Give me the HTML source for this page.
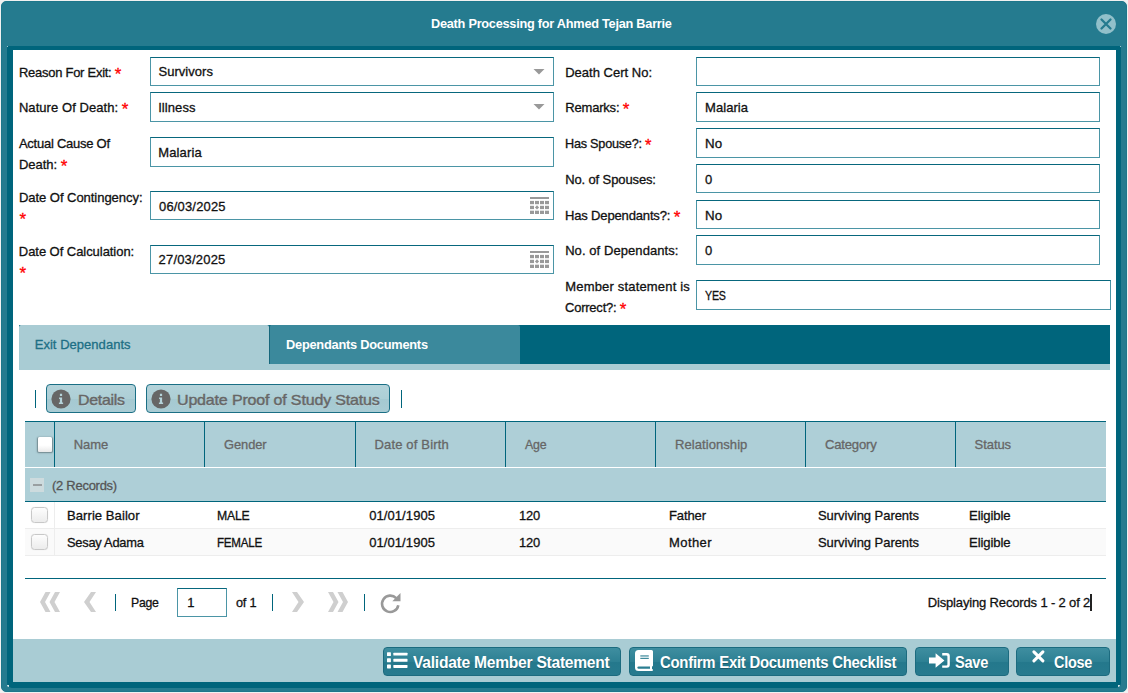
<!DOCTYPE html>
<html lang="en">
<head>
<meta charset="utf-8">
<title>Death Processing for Ahmed Tejan Barrie</title>
<style>
html,body{margin:0;padding:0;}
body{width:1128px;height:693px;overflow:hidden;background:#f1f1f1;position:relative;font-family:"Liberation Sans",sans-serif;color:#111;}
.a{position:absolute;box-sizing:border-box;}
.t{position:absolute;white-space:nowrap;line-height:20px;transform-origin:0 50%;-webkit-text-stroke:0.3px currentColor;}
.r{color:#f00;font-size:17px;line-height:0;position:relative;top:2.5px;}
.win{left:1px;top:1px;width:1126px;height:691px;background:#257b8f;border-radius:5px;border:1px solid #1e778b;}
.frame{left:7px;top:46px;width:1114px;height:642px;background:#00657c;border-radius:0 0 5px 5px;}
.wbody{left:13px;top:50px;width:1103px;height:589px;background:#fff;}
.bbar{left:13px;top:639px;width:1103px;height:43px;background:#a9ccd4;}
.inp{background:#fff;border:1px solid #4b95a6;border-top-color:#08677d;}
.tabbar{left:19px;top:325px;width:1091px;height:39px;background:#00657c;}
.tabstrip{left:19px;top:364px;width:1091px;height:6px;background:#a9ccd4;}
.tab1{left:19px;top:325px;width:250px;height:45px;background:#a9ccd4;border-radius:2px 2px 0 0;}
.tab2{left:269px;top:325px;width:251px;height:39px;background:#3b899c;border-left:1px solid #16677c;border-radius:2px 2px 0 0;}
.sep{width:1px;background:#00657c;}
.tbtn{border:1px solid #1b6f85;border-radius:4px;background:linear-gradient(#b4d3da,#adcfd6 50%,#a5c9d1 51%,#a9ccd4);}
.ghead{left:25px;top:421px;width:1081px;height:46px;background:#aecfd7;border-top:1px solid #00657c;}
.ggrp{left:25px;top:468px;width:1081px;height:34px;background:#aecfd7;border-bottom:1px solid #00657c;}
.row{left:25px;width:1081px;height:27px;border-bottom:1px solid #ededed;}
.cb{width:17px;height:16px;border:1.5px solid #c8c8c8;border-radius:3.5px;background:linear-gradient(#fdfdfd,#ececec);box-shadow:0 0 1px rgba(0,0,0,.12);}
.fbtn{border:1px solid #1c6b7f;border-radius:4px;background:linear-gradient(#3f8ea0,#2d8093 50%,#24788c 51%,#277a8e);}
svg{position:absolute;overflow:visible;}

</style>
</head>
<body>
<div class="a win"></div>
<div class="a frame"></div>
<div class="a wbody"></div>
<div class="a" style="left:7px;top:46px;width:1px;height:1px;background:#9ec3cc"></div><div class="a" style="left:1120px;top:46px;width:1px;height:1px;background:#9ec3cc"></div><div class="a" style="left:7px;top:685px;width:2px;height:2px;background:#d5e6ea;border-radius:0 0 0 2px"></div><div class="a" style="left:1118px;top:685px;width:2px;height:2px;background:#d5e6ea;border-radius:0 0 2px 0"></div>
<div class="a bbar"></div>
<!-- close tool -->
<svg style="left:1096px;top:14px" width="20" height="20" viewBox="0 0 20 20"><circle cx="10" cy="10" r="10" fill="#92c0ca"/><path d="M5.5 5.5L14.5 14.5M14.5 5.5L5.5 14.5" stroke="#257b8f" stroke-width="2.3" stroke-linecap="round" fill="none"/></svg>
<!-- left inputs -->
<div class="a inp" style="left:150px;top:57px;width:404px;height:29px"></div>
<div class="a inp" style="left:150px;top:92px;width:404px;height:30px"></div>
<div class="a inp" style="left:150px;top:137px;width:404px;height:30px"></div>
<div class="a inp" style="left:150px;top:191px;width:404px;height:29px"></div>
<div class="a inp" style="left:150px;top:245px;width:404px;height:29px"></div>
<!-- combo arrows -->
<svg style="left:533px;top:69px" width="12" height="6" viewBox="0 0 12 6"><path d="M0.5 0H11.5L6 5.5Z" fill="#999"/></svg>
<svg style="left:533px;top:104px" width="12" height="6" viewBox="0 0 12 6"><path d="M0.5 0H11.5L6 5.5Z" fill="#999"/></svg>
<!-- date icons -->
<svg style="left:530px;top:197px" width="19" height="17" viewBox="0 0 19 17" fill="#999"><rect x="0" y="0" width="19" height="2"/><g id="calg"><rect x="0" y="3.9" width="4" height="3.3"/><rect x="5" y="3.9" width="4" height="3.3"/><rect x="10" y="3.9" width="4" height="3.3"/><rect x="15" y="3.9" width="4" height="3.3"/><rect x="0" y="8.8" width="4" height="3.3"/><path d="M7 8.3L9.100 10.400L7 12.500L4.900 10.400Z"/><rect x="10" y="8.8" width="4" height="3.3"/><rect x="15" y="8.8" width="4" height="3.3"/><rect x="0" y="13.7" width="4" height="3.3"/><rect x="5" y="13.7" width="4" height="3.3"/><rect x="10" y="13.7" width="4" height="3.3"/><rect x="15" y="13.7" width="4" height="3.3"/></g></svg>
<svg style="left:530px;top:251px" width="19" height="17" viewBox="0 0 19 17" fill="#999"><rect x="0" y="0" width="19" height="2"/><rect x="0" y="3.9" width="4" height="3.3"/><rect x="5" y="3.9" width="4" height="3.3"/><rect x="10" y="3.9" width="4" height="3.3"/><rect x="15" y="3.9" width="4" height="3.3"/><rect x="0" y="8.8" width="4" height="3.3"/><path d="M7 8.3L9.100 10.400L7 12.500L4.900 10.400Z"/><rect x="10" y="8.8" width="4" height="3.3"/><rect x="15" y="8.8" width="4" height="3.3"/><rect x="0" y="13.7" width="4" height="3.3"/><rect x="5" y="13.7" width="4" height="3.3"/><rect x="10" y="13.7" width="4" height="3.3"/><rect x="15" y="13.7" width="4" height="3.3"/></svg>
<!-- right inputs -->
<div class="a inp" style="left:696px;top:57px;width:404px;height:29px"></div>
<div class="a inp" style="left:696px;top:92px;width:404px;height:30px"></div>
<div class="a inp" style="left:696px;top:128px;width:404px;height:30px"></div>
<div class="a inp" style="left:696px;top:164px;width:404px;height:29px"></div>
<div class="a inp" style="left:696px;top:200px;width:404px;height:29px"></div>
<div class="a inp" style="left:696px;top:235px;width:404px;height:30px"></div>
<div class="a inp" style="left:696px;top:280px;width:415px;height:30px"></div>
<!-- tabs -->
<div class="a tabbar"></div>
<div class="a tabstrip"></div>
<div class="a tab1"></div>
<div class="a tab2"></div>
<!-- toolbar -->
<div class="a sep" style="left:35px;top:390px;height:18px"></div>
<div class="a sep" style="left:401px;top:390px;height:18px"></div>
<div class="a tbtn" style="left:46px;top:384px;width:90px;height:29px"></div>
<div class="a tbtn" style="left:146px;top:384px;width:244px;height:29px"></div>
<svg style="left:51px;top:389px" width="20" height="20" viewBox="0 0 20 20"><circle cx="10" cy="10" r="9.6" fill="#666"/><path d="M8.1 8.5H11.1V13.6H12.1V15.1H7.9V13.6H8.9V9.9H8.1ZM8.9 4.7H11.1V7H8.9Z" fill="#b4d3da"/></svg>
<svg style="left:151px;top:389px" width="20" height="20" viewBox="0 0 20 20"><circle cx="10" cy="10" r="9.6" fill="#666"/><path d="M8.1 8.5H11.1V13.6H12.1V15.1H7.9V13.6H8.9V9.9H8.1ZM8.9 4.7H11.1V7H8.9Z" fill="#b4d3da"/></svg>
<!-- grid -->
<div class="a ghead"></div>
<div class="a ggrp"></div>
<div class="a sep" style="left:54px;top:422px;height:45px"></div>
<div class="a sep" style="left:204px;top:422px;height:45px"></div>
<div class="a sep" style="left:355px;top:422px;height:45px"></div>
<div class="a sep" style="left:505px;top:422px;height:45px"></div>
<div class="a sep" style="left:655px;top:422px;height:45px"></div>
<div class="a sep" style="left:805px;top:422px;height:45px"></div>
<div class="a sep" style="left:955px;top:422px;height:45px"></div>
<div class="a" style="left:38px;top:437px;width:14px;height:15px;background:linear-gradient(#fff 55%,#e9e9e9);border-radius:1.5px;box-shadow:0 0.5px 1.5px 0.3px rgba(70,85,90,.6)"></div>
<div class="a" style="left:30px;top:478px;width:14px;height:14px;background:#cddbde;"></div>
<div class="a" style="left:32.500px;top:484px;width:9px;height:2px;background:#9a9fa1;"></div>
<div class="a row" style="top:502px;background:#fff"></div>
<div class="a row" style="top:529px;background:#fafafa"></div>
<div class="a" style="left:54px;top:502px;width:1px;height:54px;background:#ededed"></div>
<div class="a cb" style="left:31px;top:507px"></div>
<div class="a cb" style="left:31px;top:534px"></div>
<!-- paging -->
<div class="a" style="left:25px;top:578px;width:1081px;height:1px;background:#00657c"></div>
<svg style="left:40px;top:592px" width="20" height="20" viewBox="0 0 20 20" fill="#cfcfcf"><path d="M5.500 0H10.500L5 10L10.500 20H5.500L0 10Z"/><path d="M15 0H20L14.500 10L20 20H15L9.500 10Z"/></svg>
<svg style="left:83.5px;top:592px" width="12" height="20" viewBox="0 0 12 20" fill="#cfcfcf"><path d="M7 0H12L5.5 10L12 20H7L0 10Z"/></svg>
<div class="a sep" style="left:115px;top:594px;height:17px"></div>
<div class="a inp" style="left:177px;top:588px;width:50px;height:29px"></div>
<div class="a sep" style="left:272px;top:594px;height:17px"></div>
<svg style="left:291.5px;top:592px" width="12" height="20" viewBox="0 0 12 20" fill="#cfcfcf"><path d="M0 0H5L12 10L5 20H0L6.5 10Z"/></svg>
<svg style="left:327.7px;top:592px" width="20" height="20" viewBox="0 0 20 20" fill="#cfcfcf"><path d="M0 0H5L10.500 10L5 20H0L5.500 10Z"/><path d="M9.500 0H14.500L20 10L14.500 20H9.500L15 10Z"/></svg>
<div class="a sep" style="left:364px;top:594px;height:17px"></div>
<svg style="left:379.5px;top:591.5px" width="21" height="21" viewBox="0 0 21 21"><path d="M16.2 6.2A8.2 8.2 0 1 0 18.3 13.2" fill="none" stroke="#999" stroke-width="2.6"/><path d="M20.5 1V9.2H12.3Z" fill="#999"/></svg>
<div class="a" style="left:1090px;top:594px;width:1.5px;height:17px;background:#222"></div>
<!-- bottom buttons -->
<div class="a fbtn" style="left:383px;top:647px;width:238px;height:29px"></div>
<div class="a fbtn" style="left:629px;top:647px;width:278px;height:29px"></div>
<div class="a fbtn" style="left:915px;top:647px;width:94px;height:29px"></div>
<div class="a fbtn" style="left:1016px;top:647px;width:94px;height:29px"></div>
<svg style="left:386.9px;top:651.8px" width="20.5" height="17" viewBox="0 0 21 17" fill="#fff"><rect x="0" y="0" width="4" height="4" rx=".6"/><rect x="6.5" y=".5" width="14.5" height="3" rx=".6"/><rect x="0" y="6.3" width="4" height="4" rx=".6"/><rect x="6.5" y="6.8" width="14.5" height="3" rx=".6"/><rect x="0" y="12.6" width="4" height="4" rx=".6"/><rect x="6.5" y="13.1" width="14.5" height="3" rx=".6"/></svg>
<svg style="left:635px;top:650px" width="18" height="21" viewBox="0 0 18 21"><path d="M3.5 0H16.5A1.5 1.5 0 0 1 18 1.500V15.500A1 1 0 0 1 17 16.500V19A1 1 0 0 1 17 21H3.500A3.500 3.500 0 0 1 0 17.500V3.500A3.500 3.500 0 0 1 3.500 0Z" fill="#fff"/><path d="M3.6 16.400H15V18.800H3.600A1.200 1.200 0 0 1 3.600 16.400Z" fill="#2b7e91"/><rect x="5.300" y="5.400" width="8.500" height="1.100" fill="#2b7e91"/><rect x="5.300" y="7.800" width="8.500" height="1.100" fill="#2b7e91"/></svg>
<svg style="left:929.2px;top:653.2px" width="21" height="15" viewBox="0 0 21 15" fill="#fff"><path d="M0 4.500H6.600V0.300L15.400 7.500L6.600 14.700V10.500H0Z"/><path d="M13.200 0H17.800A3 3 0 0 1 20.800 3V11.800A3 3 0 0 1 17.800 14.800H13.200V12.400H17.400A1 1 0 0 0 18.400 11.400V3.400A1 1 0 0 0 17.400 2.400H13.200Z"/></svg>
<svg style="left:1032px;top:649.9px" width="13" height="13" viewBox="0 0 13 13"><path d="M1.900 1.900L10.900 10.900M10.900 1.900L1.900 10.900" stroke="#fff" stroke-width="3.100" stroke-linecap="round" fill="none"/></svg>

<!-- text -->
<span class="t" id="title" style="left:431.41px;top:14px;font-size:13px;font-weight:bold;color:#fff;letter-spacing:-0.250px;transform:scaleX(0.9784);-webkit-text-stroke-width:0;">Death Processing for Ahmed Tejan Barrie</span>
<span class="t" id="l1" style="left:18.50px;top:63px;font-size:13px;letter-spacing:-0.250px;transform:scaleX(0.9963);">Reason For Exit: <span class="r">*</span></span>
<span class="t" id="l2" style="left:18.91px;top:98px;font-size:13px;letter-spacing:0.061px;">Nature Of Death: <span class="r">*</span></span>
<span class="t" id="l3a" style="left:18.92px;top:134px;font-size:13px;letter-spacing:-0.250px;">Actual Cause Of</span>
<span class="t" id="l3b" style="left:18.91px;top:155px;font-size:13px;letter-spacing:-0.020px;">Death: <span class="r">*</span></span>
<span class="t" id="l4a" style="left:18.80px;top:188px;font-size:13px;letter-spacing:-0.063px;transform:scaleX(1.0035);">Date Of Contingency:</span>
<span class="t" id="l4b" style="left:19.60px;top:208px;font-size:13px;"><span class="r">*</span></span>
<span class="t" id="l5a" style="left:18.80px;top:242px;font-size:13px;letter-spacing:-0.050px;">Date Of Calculation:</span>
<span class="t" id="l5b" style="left:19.60px;top:262px;font-size:13px;"><span class="r">*</span></span>
<span class="t" id="r1" style="left:565.15px;top:63px;font-size:13px;letter-spacing:0.018px;">Death Cert No:</span>
<span class="t" id="r2" style="left:565.25px;top:98px;font-size:13px;letter-spacing:-0.190px;">Remarks: <span class="r">*</span></span>
<span class="t" id="r3" style="left:565.39px;top:134px;font-size:13px;letter-spacing:-0.250px;transform:scaleX(0.9758);">Has Spouse?: <span class="r">*</span></span>
<span class="t" id="r4" style="left:565.15px;top:170px;font-size:13px;letter-spacing:-0.118px;">No. of Spouses:</span>
<span class="t" id="r5" style="left:565.20px;top:206px;font-size:13px;letter-spacing:-0.175px;transform:scaleX(1.0031);">Has Dependants?: <span class="r">*</span></span>
<span class="t" id="r6" style="left:565.15px;top:241px;font-size:13px;letter-spacing:0.074px;">No. of Dependants:</span>
<span class="t" id="r7a" style="left:565.25px;top:277px;font-size:13px;letter-spacing:0.178px;">Member statement is</span>
<span class="t" id="r7b" style="left:565.36px;top:298px;font-size:13px;letter-spacing:-0.213px;transform:scaleX(0.9973);">Correct?: <span class="r">*</span></span>
<span class="t" id="v1" style="left:158.44px;top:62px;font-size:13px;letter-spacing:0.033px;">Survivors</span>
<span class="t" id="v2" style="left:158.17px;top:98px;font-size:13px;letter-spacing:0.081px;">Illness</span>
<span class="t" id="v3" style="left:158.15px;top:143px;font-size:13px;letter-spacing:0.176px;">Malaria</span>
<span class="t" id="v4" style="left:159.06px;top:197px;font-size:13px;letter-spacing:0.193px;transform:scaleX(0.9962);">06/03/2025</span>
<span class="t" id="v5" style="left:158.54px;top:250px;font-size:13px;letter-spacing:0.192px;">27/03/2025</span>
<span class="t" id="w2" style="left:704.50px;top:98px;font-size:13px;letter-spacing:0.050px;transform:scaleX(1.0025);">Malaria</span>
<span class="t" id="w3" style="left:704.50px;top:134px;font-size:13px;letter-spacing:0.230px;transform:scaleX(1.0257);">No</span>
<span class="t" id="w4" style="left:705.10px;top:170px;font-size:13px;">0</span>
<span class="t" id="w5" style="left:704.50px;top:206px;font-size:13px;letter-spacing:0.230px;transform:scaleX(1.0257);">No</span>
<span class="t" id="w6" style="left:705.10px;top:241px;font-size:13px;">0</span>
<span class="t" id="w7" style="left:705.12px;top:286px;font-size:13px;letter-spacing:-0.250px;transform:scaleX(0.8180);">YES</span>
<span class="t" id="tab1" style="left:34.70px;top:335px;font-size:13px;color:#1d6f85;letter-spacing:0.034px;">Exit Dependants</span>
<span class="t" id="tab2" style="left:285.98px;top:335px;font-size:13px;font-weight:bold;color:#fff;letter-spacing:-0.250px;transform:scaleX(0.9858);-webkit-text-stroke-width:0;">Dependants Documents</span>
<span class="t" id="b1" style="left:77.66px;top:390px;font-size:16px;color:#666;letter-spacing:-0.250px;transform:scale(0.9924,0.95);transform-origin:0 15px;-webkit-text-stroke-width:.45px;text-shadow:0 1px 0 rgba(255,255,255,.3);">Details</span>
<span class="t" id="b2" style="left:176.69px;top:390px;font-size:16px;color:#666;letter-spacing:-0.163px;transform:scale(0.9997,0.95);transform-origin:0 15px;-webkit-text-stroke-width:.45px;text-shadow:0 1px 0 rgba(255,255,255,.3);">Update Proof of Study Status</span>
<span class="t" id="h1" style="left:73.70px;top:435px;font-size:13px;color:#666;letter-spacing:-0.068px;">Name</span>
<span class="t" id="h2" style="left:223.90px;top:435px;font-size:13px;color:#666;letter-spacing:-0.050px;transform:scaleX(0.9888);">Gender</span>
<span class="t" id="h3" style="left:374.46px;top:435px;font-size:13px;color:#666;letter-spacing:0.169px;">Date of Birth</span>
<span class="t" id="h4" style="left:525.46px;top:435px;font-size:13px;color:#666;letter-spacing:-0.250px;transform:scaleX(0.9521);">Age</span>
<span class="t" id="h5" style="left:674.70px;top:435px;font-size:13px;color:#666;letter-spacing:0.056px;transform:scaleX(1.0029);">Relationship</span>
<span class="t" id="h6" style="left:824.70px;top:435px;font-size:13px;color:#666;letter-spacing:-0.193px;transform:scaleX(1.0054);">Category</span>
<span class="t" id="h7" style="left:974.58px;top:435px;font-size:13px;color:#666;letter-spacing:-0.068px;">Status</span>
<span class="t" id="grp" style="left:51.54px;top:476px;font-size:13px;color:#555;letter-spacing:-0.250px;transform:scaleX(0.9958);">(2 Records)</span>
<span class="t" id="na" style="left:67.00px;top:506px;font-size:13px;letter-spacing:0.041px;transform:scaleX(1.0069);">Barrie Bailor</span>
<span class="t" id="ga" style="left:217.37px;top:506px;font-size:13px;letter-spacing:-0.250px;transform:scaleX(0.9411);">MALE</span>
<span class="t" id="da" style="left:369.17px;top:506px;font-size:13px;letter-spacing:0.087px;">01/01/1905</span>
<span class="t" id="ea" style="left:518.63px;top:506px;font-size:13px;letter-spacing:-0.250px;transform:scaleX(0.9940);">120</span>
<span class="t" id="fa" style="left:669.00px;top:506px;font-size:13px;letter-spacing:-0.123px;">Father</span>
<span class="t" id="ca" style="left:817.84px;top:506px;font-size:13px;letter-spacing:-0.034px;transform:scaleX(0.9976);">Surviving Parents</span>
<span class="t" id="sa" style="left:968.70px;top:506px;font-size:13px;letter-spacing:-0.112px;transform:scaleX(1.0083);">Eligible</span>
<span class="t" id="nb" style="left:66.84px;top:533px;font-size:13px;letter-spacing:-0.250px;transform:scaleX(0.9882);">Sesay Adama</span>
<span class="t" id="gb" style="left:217.34px;top:533px;font-size:13px;letter-spacing:-0.250px;transform:scaleX(0.8902);">FEMALE</span>
<span class="t" id="db" style="left:369.17px;top:533px;font-size:13px;letter-spacing:0.087px;">01/01/1905</span>
<span class="t" id="eb" style="left:518.63px;top:533px;font-size:13px;letter-spacing:-0.250px;transform:scaleX(0.9940);">120</span>
<span class="t" id="fb" style="left:669.00px;top:533px;font-size:13px;letter-spacing:0.418px;">Mother</span>
<span class="t" id="cb" style="left:817.84px;top:533px;font-size:13px;letter-spacing:-0.034px;transform:scaleX(0.9976);">Surviving Parents</span>
<span class="t" id="sb" style="left:968.70px;top:533px;font-size:13px;letter-spacing:-0.112px;transform:scaleX(1.0083);">Eligible</span>
<span class="t" id="p1" style="left:131.37px;top:593px;font-size:13px;letter-spacing:-0.250px;transform:scaleX(0.9429);">Page</span>
<span class="t" id="p2" style="left:187.28px;top:593px;font-size:13px;">1</span>
<span class="t" id="p3" style="left:235.69px;top:593px;font-size:13px;letter-spacing:-0.250px;transform:scaleX(0.9781);">of 1</span>
<span class="t" id="p4" style="left:927.70px;top:593px;font-size:13px;letter-spacing:-0.152px;">Displaying Records 1 - 2 of 2</span>
<span class="t" id="f1" style="left:412.97px;top:653px;font-size:16px;font-weight:bold;color:#fff;letter-spacing:-0.250px;transform:scaleX(0.9737);-webkit-text-stroke-width:0;text-shadow:0 1px 0 rgba(0,0,0,.25);">Validate Member Statement</span>
<span class="t" id="f2" style="left:660.10px;top:653px;font-size:16px;font-weight:bold;color:#fff;letter-spacing:-0.250px;transform:scaleX(0.9289);-webkit-text-stroke-width:0;text-shadow:0 1px 0 rgba(0,0,0,.25);">Confirm Exit Documents Checklist</span>
<span class="t" id="f3" style="left:955.03px;top:653px;font-size:16px;font-weight:bold;color:#fff;letter-spacing:-0.250px;transform:scaleX(0.9101);-webkit-text-stroke-width:0;text-shadow:0 1px 0 rgba(0,0,0,.25);">Save</span>
<span class="t" id="f4" style="left:1053.72px;top:653px;font-size:16px;font-weight:bold;color:#fff;letter-spacing:-0.250px;transform:scaleX(0.9005);-webkit-text-stroke-width:0;text-shadow:0 1px 0 rgba(0,0,0,.25);">Close</span>
</body>
</html>
